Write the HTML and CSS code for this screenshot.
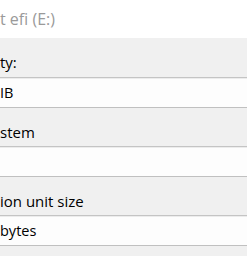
FILE: index.html
```html
<!DOCTYPE html>
<html lang="en">

<head>
    <meta charset="UTF-8">
    <meta name="viewport" content="width=device-width, initial-scale=1.0">
    <title>Format</title>
    <link rel="stylesheet" href="styles.css">
</head>

<body>
    <header class="title">
        <span>t efi (E:)</span>
    </header>
    <main class="form">
        <div class="label first">ty:</div>
        <div class="field">IB</div>
        <div class="label">stem</div>
        <div class="field"></div>
        <div class="label">ion unit size</div>
        <div class="field">bytes</div>
    </main>
</body>

</html>
```
FILE: styles.css
```css
* {
    box-sizing: border-box;
}

body {
    margin: 0;
    background: #f0f0f0;
    font-family: "Open Sans", "Noto Sans", sans-serif;
    color: #000;
}

.title {
    background: #fff;
    height: 38px;
    display: flex;
    align-items: center;
    font-size: 16px;
    color: #9a9a9a;
    padding-bottom: 1px;
}

.form {
    display: flex;
    flex-direction: column;
}

.label {
    height: 38px;
    display: flex;
    align-items: center;
    font-size: 15px;
    padding-top: 9px;
}

.label.first {
    height: 39px;
}

.field {
    height: 31px;
    background: #fdfdfd;
    border-top: 1px solid #c4c4c4;
    border-bottom: 1px solid #c0c0c0;
    box-shadow: inset 0 1px 0 #ececec;
    display: flex;
    align-items: center;
    font-size: 14.5px;
}
```
